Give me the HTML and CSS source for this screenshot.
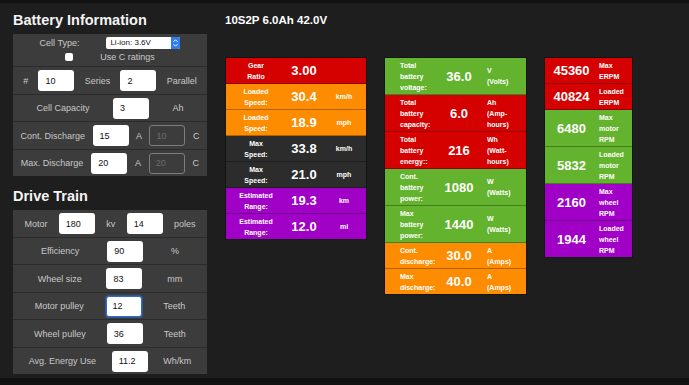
FILE: index.html
```html
<!DOCTYPE html>
<html lang="en">
<head>
  <meta charset="UTF-8">
  <meta name="viewport" content="width=device-width, initial-scale=1.0">
  <title>Board Calculator</title>
  <link rel="stylesheet" href="styles.css">
</head>
<body>
  <div class="page">
    <div class="inputs">
      <h2>Battery Information</h2>
      <div class="panel">
        <div class="row row-cell">
          <div class="line">
            <span>Cell Type:</span>
            <div class="select">
              <span class="select-text">Li-ion: 3.6V</span>
              <span class="select-btn">
                <svg width="9" height="12" viewBox="0 0 9 12"><path d="M2.5 4.8 4.5 2.8 6.5 4.8M2.5 7.2 4.5 9.2 6.5 7.2" fill="none" stroke="#fff" stroke-width="1"/></svg>
              </span>
            </div>
          </div>
          <div class="line">
            <input type="checkbox" class="check">
            <span>Use C ratings</span>
          </div>
        </div>
        <div class="row">
          <span>#</span>
          <input type="text" value="10">
          <span>Series</span>
          <input type="text" value="2">
          <span>Parallel</span>
        </div>
        <div class="row">
          <span>Cell Capacity</span>
          <input type="text" value="3">
          <span>Ah</span>
        </div>
        <div class="row">
          <span>Cont. Discharge</span>
          <input type="text" value="15">
          <span>A</span>
          <input type="text" value="10" class="off" disabled>
          <span>C</span>
        </div>
        <div class="row">
          <span>Max. Discharge</span>
          <input type="text" value="20">
          <span>A</span>
          <input type="text" value="20" class="off" disabled>
          <span>C</span>
        </div>
      </div>

      <h2 class="second">Drive Train</h2>
      <div class="panel panel-drive">
        <div class="row">
          <span>Motor</span>
          <input type="text" value="180">
          <span>kv</span>
          <input type="text" value="14">
          <span>poles</span>
        </div>
        <div class="row">
          <span>Efficiency</span>
          <input type="text" value="90">
          <span>%</span>
        </div>
        <div class="row">
          <span>Wheel size</span>
          <input type="text" value="83">
          <span>mm</span>
        </div>
        <div class="row">
          <span>Motor pulley</span>
          <input type="text" value="12" class="focused">
          <span>Teeth</span>
        </div>
        <div class="row">
          <span>Wheel pulley</span>
          <input type="text" value="36">
          <span>Teeth</span>
        </div>
        <div class="row">
          <span>Avg. Energy Use</span>
          <input type="text" value="11.2">
          <span>Wh/km</span>
        </div>
      </div>
    </div>

    <div class="results">
      <h3>10S2P 6.0Ah 42.0V</h3>
      <div class="tables">
        <div class="stats speeds">
          <div class="stat red">
            <span class="label">Gear<br>Ratio</span>
            <span class="value">3.00</span>
            <span class="unit"></span>
          </div>
          <div class="stat orange">
            <span class="label">Loaded<br>Speed:</span>
            <span class="value">30.4</span>
            <span class="unit">km/h</span>
          </div>
          <div class="stat orange">
            <span class="label">Loaded<br>Speed:</span>
            <span class="value">18.9</span>
            <span class="unit">mph</span>
          </div>
          <div class="stat dark">
            <span class="label">Max<br>Speed:</span>
            <span class="value">33.8</span>
            <span class="unit">km/h</span>
          </div>
          <div class="stat dark">
            <span class="label">Max<br>Speed:</span>
            <span class="value">21.0</span>
            <span class="unit">mph</span>
          </div>
          <div class="stat purple">
            <span class="label">Estimated<br>Range:</span>
            <span class="value">19.3</span>
            <span class="unit">km</span>
          </div>
          <div class="stat purple">
            <span class="label">Estimated<br>Range:</span>
            <span class="value">12.0</span>
            <span class="unit">mi</span>
          </div>
        </div>

        <div class="stats battery">
          <div class="stat green">
            <span class="label">Total<br>battery<br>voltage:</span>
            <span class="value">36.0</span>
            <span class="unit">V<br>(Volts)</span>
          </div>
          <div class="stat red">
            <span class="label">Total<br>battery<br>capacity:</span>
            <span class="value">6.0</span>
            <span class="unit">Ah<br>(Amp-<br>hours)</span>
          </div>
          <div class="stat red">
            <span class="label">Total<br>battery<br>energy::</span>
            <span class="value">216</span>
            <span class="unit">Wh<br>(Watt-<br>hours)</span>
          </div>
          <div class="stat green">
            <span class="label">Cont.<br>battery<br>power:</span>
            <span class="value">1080</span>
            <span class="unit">W<br>(Watts)</span>
          </div>
          <div class="stat green">
            <span class="label">Max<br>battery<br>power:</span>
            <span class="value">1440</span>
            <span class="unit">W<br>(Watts)</span>
          </div>
          <div class="stat orange">
            <span class="label">Cont.<br>discharge:</span>
            <span class="value">30.0</span>
            <span class="unit">A<br>(Amps)</span>
          </div>
          <div class="stat orange">
            <span class="label">Max<br>discharge:</span>
            <span class="value">40.0</span>
            <span class="unit">A<br>(Amps)</span>
          </div>
        </div>

        <div class="stats rpm">
          <div class="stat red">
            <span class="value">45360</span>
            <span class="unit">Max<br>ERPM</span>
          </div>
          <div class="stat red">
            <span class="value">40824</span>
            <span class="unit">Loaded<br>ERPM</span>
          </div>
          <div class="stat green">
            <span class="value">6480</span>
            <span class="unit">Max<br>motor<br>RPM</span>
          </div>
          <div class="stat green">
            <span class="value">5832</span>
            <span class="unit">Loaded<br>motor<br>RPM</span>
          </div>
          <div class="stat purple">
            <span class="value">2160</span>
            <span class="unit">Max<br>wheel<br>RPM</span>
          </div>
          <div class="stat purple">
            <span class="value">1944</span>
            <span class="unit">Loaded<br>wheel<br>RPM</span>
          </div>
        </div>
      </div>
    </div>
  </div>
</body>
</html>
```

FILE: styles.css
```css
html {
  background: #111;
}
body {
  margin: 0;
  font-family: "Liberation Sans", Arial, sans-serif;
}
.page {
  margin-top: 3px;
  height: 375px;
  background: #1e1e1e;
  display: flex;
  align-items: flex-start;
}

/* left column */
.inputs {
  width: 194px;
  margin-left: 13px;
}
h2 {
  margin: 9px 0 5px;
  font-size: 14.5px;
  line-height: 17px;
  color: #f4f4f4;
}
h2.second {
  margin-top: 12px;
}
.panel {
  background: #3c3c3c;
}
.row {
  display: flex;
  align-items: center;
  justify-content: space-evenly;
  padding: 3px 0 2.5px;
  border-bottom: 1px solid #2b2b2b;
  font-size: 9px;
  color: #c8c8c8;
}
.row:last-child {
  border-bottom: none;
}
.row-cell {
  flex-direction: column;
  gap: 2px;
  padding: 3px 0;
}
.line {
  display: flex;
  align-items: center;
  justify-content: center;
  gap: 27px;
  height: 12px;
}
.select {
  display: flex;
  width: 74px;
  height: 12px;
  background: #fff;
  border-radius: 2px;
}
.select-text {
  flex: 1;
  padding-left: 4px;
  font-size: 8px;
  line-height: 12px;
  color: #111;
}
.select-btn {
  width: 9px;
  background: #2f7bf2;
  border-radius: 0 2px 2px 0;
  display: flex;
}
.check {
  appearance: none;
  width: 8px;
  height: 8px;
  margin: 0;
  background: #fff;
  border-radius: 2px;
}
input[type="text"] {
  width: 36px;
  height: 21px;
  box-sizing: border-box;
  margin: 0;
  border: 0;
  border-radius: 3px;
  padding: 0 0 0 7px;
  font-family: "Liberation Sans", Arial, sans-serif;
  font-size: 9px;
  color: #111;
  background: #fff;
}
input.off {
  background: transparent;
  border: 1px solid #7d7d7d;
  padding-left: 6px;
  color: #6c6c6c;
}
input.focused {
  border: 1px solid #2d6bd1;
  padding-left: 6px;
  box-shadow: 0 0 0 1px rgba(45, 107, 209, 0.55);
}

/* right side */
.results {
  margin-left: 18px;
  padding-top: 10px;
}
.results h3 {
  margin: 0 0 30px;
  font-size: 11.5px;
  line-height: 14px;
  color: #fff;
}
.tables {
  display: flex;
  align-items: flex-start;
  gap: 17px;
}
.stats {
  border: 1px solid #141414;
  color: #fff;
}
.stat {
  display: grid;
  align-items: center;
  min-height: 22px;
  padding: 1.5px 0;
  border-bottom: 1px solid rgba(0, 0, 0, 0.3);
}
.stat:last-child {
  border-bottom: none;
}
.label, .unit {
  font-size: 7px;
  font-weight: bold;
  line-height: 11px;
  white-space: nowrap;
}
.value {
  font-size: 13px;
  font-weight: bold;
  text-align: center;
}
.red { background: #d50000; }
.orange { background: #fd8c00; }
.green { background: #63b32e; }
.purple { background: #a100c6; }
.dark { background: #2c2c2c; }

.speeds {
  width: 140px;
}
.speeds .stat {
  grid-template-columns: 60px 36px 1fr;
}
.speeds .label, .speeds .unit {
  text-align: center;
}
.battery {
  width: 141px;
}
.battery .stat {
  grid-template-columns: 52px 44px 1fr;
}
.battery .label {
  padding-left: 15px;
}
.battery .unit {
  padding-left: 6px;
}
.rpm {
  width: 87px;
}
.rpm .stat {
  grid-template-columns: 53px 1fr;
}
.rpm .unit {
  padding-left: 1px;
}
```
